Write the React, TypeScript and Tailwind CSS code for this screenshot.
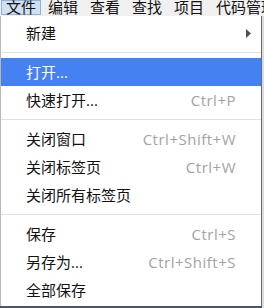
import React from 'react';

type Item = { label: string; shortcut?: string; submenu?: boolean; active?: boolean } | 'sep';

const items: Item[] = [
  { label: '新建', submenu: true },
  'sep',
  { label: '打开...', active: true },
  { label: '快速打开...', shortcut: 'Ctrl+P' },
  'sep',
  { label: '关闭窗口', shortcut: 'Ctrl+Shift+W' },
  { label: '关闭标签页', shortcut: 'Ctrl+W' },
  { label: '关闭所有标签页' },
  'sep',
  { label: '保存', shortcut: 'Ctrl+S' },
  { label: '另存为...', shortcut: 'Ctrl+Shift+S' },
  { label: '全部保存' },
];

const menus = ['编辑', '查看', '查找', '项目', '代码管理'];

export default function App() {
  return (
    <div
      className="w-[264px] h-[308px] overflow-hidden bg-[#4b5563] flex flex-col"
      style={{ fontFamily: '"Open Sans", "Noto Sans CJK SC", sans-serif' }}
    >
      <div className="h-[16px] bg-[#f0f0f0] flex items-start text-[15px] leading-[15px] text-[#111] whitespace-nowrap overflow-hidden">
        <div className="h-[15px] ml-px px-[4px] bg-[#cfe0f3] border border-[#8fb0d8] leading-[13px]">文件</div>
        {menus.map((m, i) => (
          <div key={m} className={i === 0 ? 'ml-[7px]' : 'ml-[12px]'}>
            {m}
          </div>
        ))}
      </div>
      <div className="flex flex-1">
        <div className="w-[262px] h-[290px] bg-white border-l border-[#b8b8b8] border-r border-r-[#6b6b6b] pt-[3px] flex flex-col">
          {items.map((it, i) =>
            it === 'sep' ? (
              <div key={i} className="h-[11px] flex items-center">
                <div className="h-px w-full bg-[#e2e2e2]" />
              </div>
            ) : (
              <div
                key={i}
                className={`h-[28px] shrink-0 flex items-center pl-[25px] pr-[25px] text-[15px] ${
                  it.active ? 'bg-[#4581f0] text-white' : 'text-[#111]'
                }`}
              >
                <span className="flex-1">{it.label}</span>
                {it.shortcut && <span className="text-[#a3a3a3] tracking-[0.5px]">{it.shortcut}</span>}
                {it.submenu && (
                  <svg width="6" height="9" viewBox="0 0 6 9" className="mr-[-16px]">
                    <path d="M0 0 L5 4.5 L0 9 Z" fill="#505050" />
                  </svg>
                )}
              </div>
            )
          )}
        </div>
        <div className="flex-1 bg-[#dcdcdc]" />
      </div>
    </div>
  );
}
